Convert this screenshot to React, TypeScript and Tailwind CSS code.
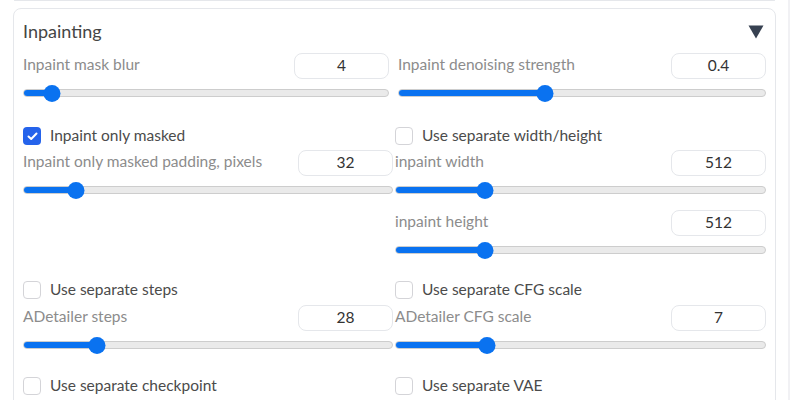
import React from 'react'

const font = { fontFamily: 'Lato, "Liberation Sans", sans-serif' }

function NumberBox({ value }: { value: string }): React.JSX.Element {
  return (
    <div className="w-[95px] h-[26px] rounded-lg border border-[#e5e7eb] bg-white flex items-center justify-center text-[15.5px] text-[#333]">
      {value}
    </div>
  )
}

function Slider({ pct }: { pct: number }): React.JSX.Element {
  return (
    <div className="relative h-[28px] flex items-center">
      <div className="w-full h-[8px] rounded-full bg-[#eaeaea] border border-[#cdcdcd] overflow-hidden">
        <div className="h-full bg-[#0a72f0]" style={{ width: `${pct}%` }} />
      </div>
      <div
        className="absolute w-[17px] h-[17px] rounded-full bg-[#0a72f0] -translate-x-1/2"
        style={{ left: `${pct}%` }}
      />
    </div>
  )
}

function Field({
  label,
  value,
  pct,
  gap = 0,
}: {
  label: string
  value: string
  pct: number
  gap?: number
}): React.JSX.Element {
  return (
    <div style={{ marginTop: gap }}>
      <div className="flex items-center justify-between h-[26px]">
        <span className="text-[15.5px] text-[#8c8c8c] -mt-[3px]">{label}</span>
        <NumberBox value={value} />
      </div>
      <Slider pct={pct} />
    </div>
  )
}

function Check({ label, checked = false }: { label: string; checked?: boolean }): React.JSX.Element {
  return (
    <div className="flex items-center h-[18px] gap-[9px]">
      {checked ? (
        <div className="w-[18px] h-[18px] rounded-[4px] bg-[#2563eb] flex items-center justify-center">
          <svg width="11" height="9" viewBox="0 0 11 9" fill="none">
            <path d="M1.5 4.5 L4.2 7 L9.5 1.5" stroke="white" strokeWidth="2" strokeLinecap="round" strokeLinejoin="round" />
          </svg>
        </div>
      ) : (
        <div className="w-[18px] h-[18px] rounded-[4px] border border-[#d4d4d8] bg-white" />
      )}
      <span className="text-[15.5px] text-[#4b4b4b]">{label}</span>
    </div>
  )
}

export default function App(): React.JSX.Element {
  return (
    <div className="w-[800px] h-[400px] overflow-hidden bg-white flex" style={font}>
      <div className="w-[776px] pl-[13px] flex flex-col">
        <div className="h-[3px] mx-px border-x border-b border-[#e5e7eb] rounded-b-lg" />
        <div className="mt-[7px] border border-[#e5e7eb] rounded-lg pt-[2px] pl-[9px] pr-[8px] pb-6">
          <div className="h-[42px] pt-[8px] flex items-start justify-between">
            <span className="text-[18px] leading-[24px] text-[#454545]">Inpainting</span>
            <svg width="16" height="14" viewBox="0 0 16 14" className="mt-[6px] mr-[3px]">
              <path d="M0.5 0.5 H15.5 L8 13.5 Z" fill="#374151" />
            </svg>
          </div>

          <div className="grid grid-cols-[366px_368px] gap-x-[9px]">
            <Field label="Inpaint mask blur" value="4" pct={8} />
            <Field label="Inpaint denoising strength" value="0.4" pct={40} />
          </div>

          <div className="grid grid-cols-[370px_371px] gap-x-[2px] mt-[20px]">
            <div>
              <Check label="Inpaint only masked" checked />
              <Field label="Inpaint only masked padding, pixels" value="32" pct={14.3} gap={5} />
            </div>
            <div>
              <Check label="Use separate width/height" />
              <Field label="inpaint width" value="512" pct={24.3} gap={5} />
              <Field label="inpaint height" value="512" pct={24.3} gap={6} />
            </div>
          </div>

          <div className="grid grid-cols-[370px_371px] gap-x-[2px] mt-[17px]">
            <div>
              <Check label="Use separate steps" />
              <Field label="ADetailer steps" value="28" pct={20} gap={6} />
            </div>
            <div>
              <Check label="Use separate CFG scale" />
              <Field label="ADetailer CFG scale" value="7" pct={24.8} gap={6} />
            </div>
          </div>

          <div className="grid grid-cols-[370px_371px] gap-x-[2px] mt-[18px]">
            <Check label="Use separate checkpoint" />
            <Check label="Use separate VAE" />
          </div>
        </div>
      </div>
      <div className="ml-[12px] w-[2px] h-full bg-[#f1f1f4]" />
    </div>
  )
}
